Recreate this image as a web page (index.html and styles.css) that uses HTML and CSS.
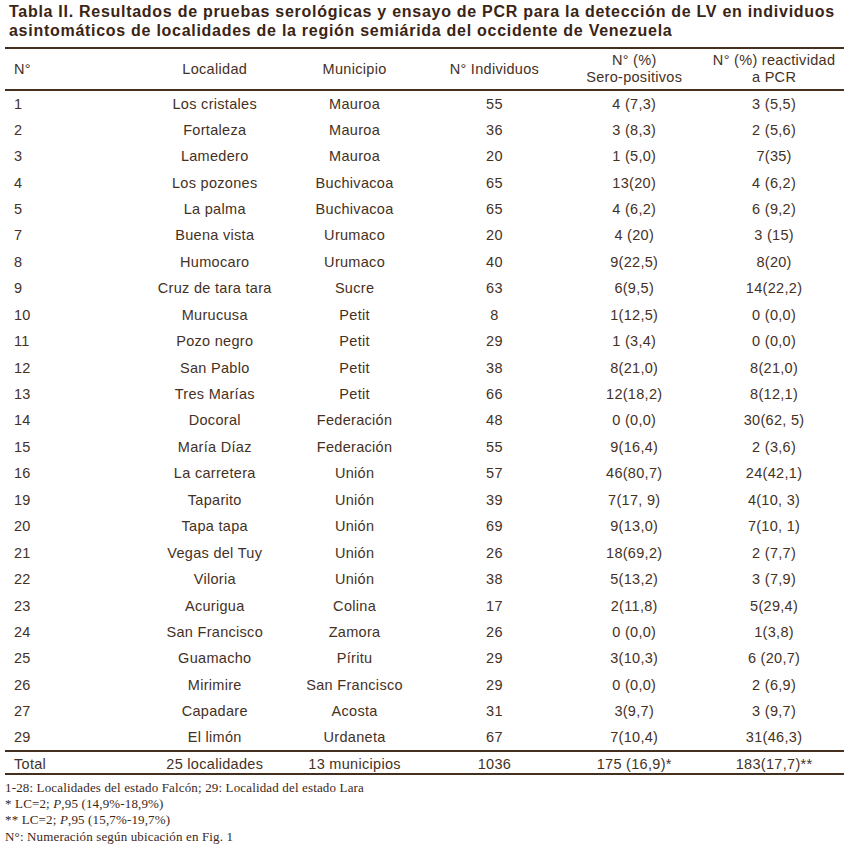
FILE: index.html
```html
<!DOCTYPE html>
<html lang="es">
<head>
<meta charset="utf-8">
<title>Tabla II</title>
<link rel="stylesheet" href="styles.css">
</head>
<body>
<div class="page">
  <h1 class="title">Tabla II. Resultados de pruebas serológicas y ensayo de PCR para la detección de LV en individuos asintomáticos de localidades de la región semiárida del occidente de Venezuela</h1>
  <table class="data">
    <colgroup><col><col><col><col><col><col></colgroup>
    <thead>
      <tr>
        <th class="left">N°</th>
        <th>Localidad</th>
        <th>Municipio</th>
        <th>N° Individuos</th>
        <th>N° (%)<br>Sero-positivos</th>
        <th>N° (%) reactividad<br>a PCR</th>
      </tr>
    </thead>
    <tbody>
      <tr><td class="left">1</td><td>Los cristales</td><td>Mauroa</td><td>55</td><td>4 (7,3)</td><td>3 (5,5)</td></tr>
      <tr><td class="left">2</td><td>Fortaleza</td><td>Mauroa</td><td>36</td><td>3 (8,3)</td><td>2 (5,6)</td></tr>
      <tr><td class="left">3</td><td>Lamedero</td><td>Mauroa</td><td>20</td><td>1 (5,0)</td><td>7(35)</td></tr>
      <tr><td class="left">4</td><td>Los pozones</td><td>Buchivacoa</td><td>65</td><td>13(20)</td><td>4 (6,2)</td></tr>
      <tr><td class="left">5</td><td>La palma</td><td>Buchivacoa</td><td>65</td><td>4 (6,2)</td><td>6 (9,2)</td></tr>
      <tr><td class="left">7</td><td>Buena vista</td><td>Urumaco</td><td>20</td><td>4 (20)</td><td>3 (15)</td></tr>
      <tr><td class="left">8</td><td>Humocaro</td><td>Urumaco</td><td>40</td><td>9(22,5)</td><td>8(20)</td></tr>
      <tr><td class="left">9</td><td>Cruz de tara tara</td><td>Sucre</td><td>63</td><td>6(9,5)</td><td>14(22,2)</td></tr>
      <tr><td class="left">10</td><td>Murucusa</td><td>Petit</td><td>8</td><td>1(12,5)</td><td>0 (0,0)</td></tr>
      <tr><td class="left">11</td><td>Pozo negro</td><td>Petit</td><td>29</td><td>1 (3,4)</td><td>0 (0,0)</td></tr>
      <tr><td class="left">12</td><td>San Pablo</td><td>Petit</td><td>38</td><td>8(21,0)</td><td>8(21,0)</td></tr>
      <tr><td class="left">13</td><td>Tres Marías</td><td>Petit</td><td>66</td><td>12(18,2)</td><td>8(12,1)</td></tr>
      <tr><td class="left">14</td><td>Docoral</td><td>Federación</td><td>48</td><td>0 (0,0)</td><td>30(62, 5)</td></tr>
      <tr><td class="left">15</td><td>María Díaz</td><td>Federación</td><td>55</td><td>9(16,4)</td><td>2 (3,6)</td></tr>
      <tr><td class="left">16</td><td>La carretera</td><td>Unión</td><td>57</td><td>46(80,7)</td><td>24(42,1)</td></tr>
      <tr><td class="left">19</td><td>Taparito</td><td>Unión</td><td>39</td><td>7(17, 9)</td><td>4(10, 3)</td></tr>
      <tr><td class="left">20</td><td>Tapa tapa</td><td>Unión</td><td>69</td><td>9(13,0)</td><td>7(10, 1)</td></tr>
      <tr><td class="left">21</td><td>Vegas del Tuy</td><td>Unión</td><td>26</td><td>18(69,2)</td><td>2 (7,7)</td></tr>
      <tr><td class="left">22</td><td>Viloria</td><td>Unión</td><td>38</td><td>5(13,2)</td><td>3 (7,9)</td></tr>
      <tr><td class="left">23</td><td>Acurigua</td><td>Colina</td><td>17</td><td>2(11,8)</td><td>5(29,4)</td></tr>
      <tr><td class="left">24</td><td>San Francisco</td><td>Zamora</td><td>26</td><td>0 (0,0)</td><td>1(3,8)</td></tr>
      <tr><td class="left">25</td><td>Guamacho</td><td>Píritu</td><td>29</td><td>3(10,3)</td><td>6 (20,7)</td></tr>
      <tr><td class="left">26</td><td>Mirimire</td><td>San Francisco</td><td>29</td><td>0 (0,0)</td><td>2 (6,9)</td></tr>
      <tr><td class="left">27</td><td>Capadare</td><td>Acosta</td><td>31</td><td>3(9,7)</td><td>3 (9,7)</td></tr>
      <tr><td class="left">29</td><td>El limón</td><td>Urdaneta</td><td>67</td><td>7(10,4)</td><td>31(46,3)</td></tr>
    </tbody>
    <tfoot>
      <tr><td class="left">Total</td><td>25 localidades</td><td>13 municipios</td><td>1036</td><td>175 (16,9)*</td><td>183(17,7)**</td></tr>
    </tfoot>
  </table>
  <div class="notes">
    <p>1-28: Localidades del estado Falcón; 29: Localidad del estado Lara</p>
    <p>* LC=2; <i>P</i>,95 (14,9%-18,9%)</p>
    <p>** LC=2; <i>P</i>,95 (15,7%-19,7%)</p>
    <p>N°: Numeración según ubicación en Fig. 1</p>
  </div>
</div>
</body>
</html>
```

FILE: styles.css
```css
html, body {
  margin: 0;
  padding: 0;
  background: #ffffff;
}

.page {
  padding: 2px 10px 0 5px;
  color: #3b2719;
}

.title {
  margin: 0 0 7px 4px;
  font-family: "Liberation Sans", Arial, sans-serif;
  font-weight: bold;
  font-size: 16px;
  line-height: 19px;
  letter-spacing: 0.72px;
  color: #3a2415;
}

.data {
  width: 839px;
  border-collapse: collapse;
  table-layout: fixed;
  font-family: "Liberation Sans", Arial, sans-serif;
  font-size: 14.5px;
  letter-spacing: 0.3px;
  color: #45311f;
}

.data col {
  width: 16.666%;
}

.data th,
.data td {
  padding: 0;
  text-align: center;
  font-weight: normal;
}

.data th.left,
.data td.left {
  text-align: left;
  padding-left: 9px;
}

.data thead tr {
  height: 42px;
  border-top: 2px solid #45301f;
  border-bottom: 2px solid #45301f;
}

.data thead th {
  line-height: 17px;
  vertical-align: middle;
}

.data tbody tr {
  height: 26.45px;
}

.data tbody tr:first-child td {
  padding-top: 1px;
}

.data tfoot tr {
  height: 23px;
  border-top: 2px solid #45301f;
  border-bottom: 2px solid #45301f;
}

.data tfoot td {
  padding-top: 3px;
}

.notes {
  margin-top: 5px;
  font-family: "Liberation Serif", "Times New Roman", serif;
  font-size: 13px;
  line-height: 16.2px;
  letter-spacing: 0.15px;
  color: #3b2719;
}

.notes p {
  margin: 0;
}
```
